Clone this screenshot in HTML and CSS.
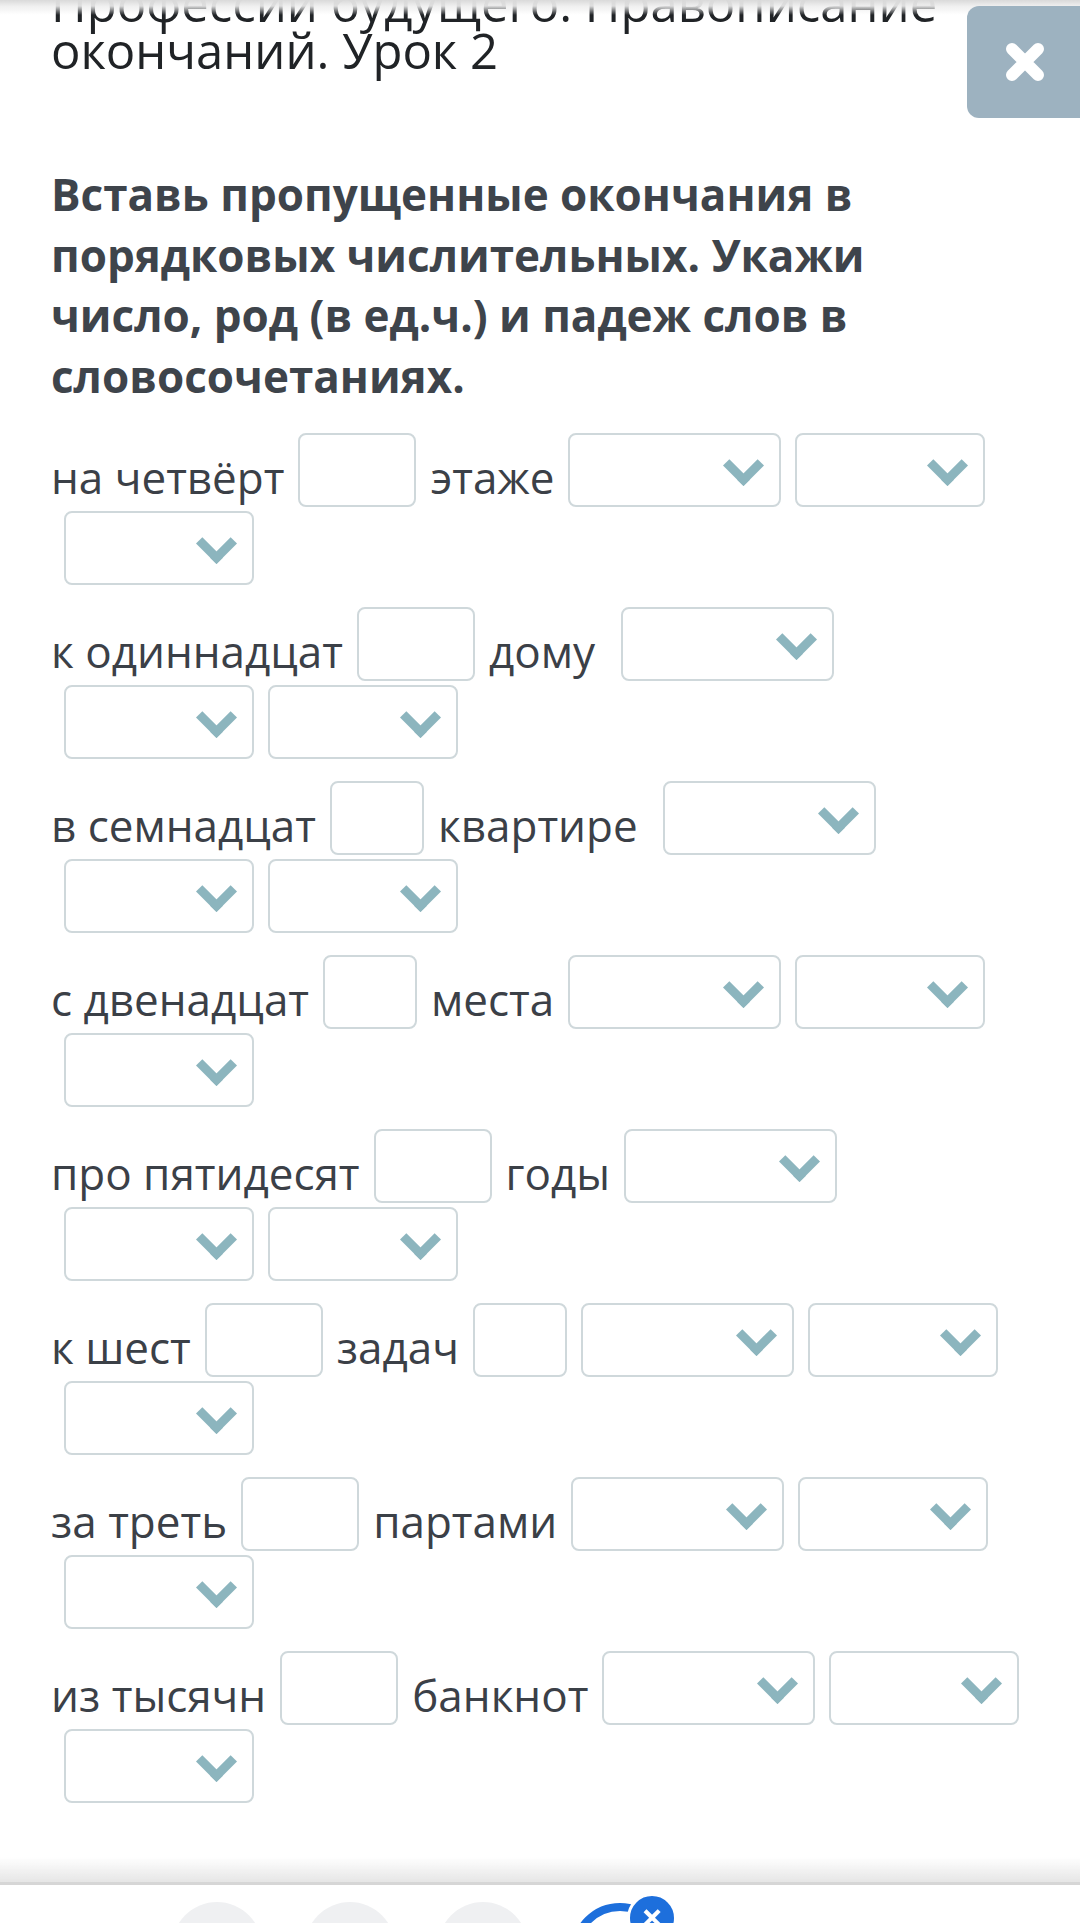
FILE: index.html
```html
<!DOCTYPE html>
<html lang="ru">
<head>
  <meta charset="UTF-8">
  <meta name="viewport" content="width=device-width, initial-scale=1.0">
  <title>Профессии будущего. Правописание окончаний. Урок 2</title>
  <link rel="stylesheet" href="styles.css">
</head>
<body>

  <div class="top-shade"></div>
  <button class="close-btn" type="button" aria-label="Закрыть">
    <svg width="44" height="42" viewBox="0 0 44 42"><path d="M9 8 L35 34 M35 8 L9 34" stroke="#fff" stroke-width="12" stroke-linecap="round"/></svg>
  </button>

  <main class="lesson">
    <h1 class="title">Профессии будущего. Правописание окончаний. Урок 2</h1>
    <p class="task">Вставь пропущенные окончания в порядковых числительных. Укажи число, род (в ед.ч.) и падеж слов в словосочетаниях.</p>

    <!-- 1 -->
    <div class="phrase">
      <div class="line">
        <span class="word">на четвёрт</span>
        <input class="gap" type="text">
        <span class="word">этаже</span>
        <span class="pick big"><select><option></option></select></span>
        <span class="pick"><select><option></option></select></span>
      </div>
      <div class="line">
        <span class="pick"><select><option></option></select></span>
      </div>
    </div>

    <!-- 2 -->
    <div class="phrase">
      <div class="line">
        <span class="word">к одиннадцат</span>
        <input class="gap" type="text">
        <span class="word">дому </span>
        <span class="pick big"><select><option></option></select></span>
      </div>
      <div class="line">
        <span class="pick"><select><option></option></select></span>
        <span class="pick"><select><option></option></select></span>
      </div>
    </div>

    <!-- 3 -->
    <div class="phrase">
      <div class="line">
        <span class="word">в семнадцат</span>
        <input class="gap short" type="text">
        <span class="word">квартире </span>
        <span class="pick big"><select><option></option></select></span>
      </div>
      <div class="line">
        <span class="pick"><select><option></option></select></span>
        <span class="pick"><select><option></option></select></span>
      </div>
    </div>

    <!-- 4 -->
    <div class="phrase">
      <div class="line">
        <span class="word">с двенадцат</span>
        <input class="gap short" type="text">
        <span class="word">места</span>
        <span class="pick big"><select><option></option></select></span>
        <span class="pick"><select><option></option></select></span>
      </div>
      <div class="line">
        <span class="pick"><select><option></option></select></span>
      </div>
    </div>

    <!-- 5 -->
    <div class="phrase">
      <div class="line">
        <span class="word">про пятидесят</span>
        <input class="gap" type="text">
        <span class="word">годы</span>
        <span class="pick big"><select><option></option></select></span>
      </div>
      <div class="line">
        <span class="pick"><select><option></option></select></span>
        <span class="pick"><select><option></option></select></span>
      </div>
    </div>

    <!-- 6 -->
    <div class="phrase">
      <div class="line">
        <span class="word">к шест</span>
        <input class="gap" type="text">
        <span class="word">задач</span>
        <input class="gap short" type="text">
        <span class="pick big"><select><option></option></select></span>
        <span class="pick"><select><option></option></select></span>
      </div>
      <div class="line">
        <span class="pick"><select><option></option></select></span>
      </div>
    </div>

    <!-- 7 -->
    <div class="phrase">
      <div class="line">
        <span class="word">за треть</span>
        <input class="gap" type="text">
        <span class="word">партами</span>
        <span class="pick big"><select><option></option></select></span>
        <span class="pick"><select><option></option></select></span>
      </div>
      <div class="line">
        <span class="pick"><select><option></option></select></span>
      </div>
    </div>

    <!-- 8 -->
    <div class="phrase">
      <div class="line">
        <span class="word">из тысячн</span>
        <input class="gap" type="text">
        <span class="word">банкнот</span>
        <span class="pick big"><select><option></option></select></span>
        <span class="pick"><select><option></option></select></span>
      </div>
      <div class="line">
        <span class="pick"><select><option></option></select></span>
      </div>
    </div>
  </main>

  <!-- нижняя панель -->
  <footer class="dock">
    <div class="dock-nav">
      <span class="dot"></span>
      <span class="dot"></span>
      <span class="dot"></span>
      <span class="dock-active">
        <span class="ring"></span>
        <span class="badge">×</span>
      </span>
    </div>
  </footer>

</body>
</html>
```

FILE: styles.css
```css
/* Общие стили */
body {
  margin: 0;
  background: #fff;
  font-family: "Open Sans", "Noto Sans", sans-serif;
  color: #3b4047;
  overflow: hidden;
}
.lesson {
  padding: 0 48px 0 51px;
}
.title {
  margin: -20px 0 0;
  font-size: 49px;
  font-weight: 400;
  line-height: 47px;
  color: #202326;
}
.task {
  margin: 90px 70px 27px 0;
  font-size: 44px;
  font-weight: 700;
  line-height: 60.5px;
  color: #3e444b;
}

/* Строки с пропусками */
.phrase {
  margin-bottom: 22px;
}
.line {
  display: flex;
  align-items: flex-end;
}
.line + .line {
  margin-top: 4px;
  padding-left: 13px;
}
.line > * + * {
  margin-left: 14px;
}
.word {
  font-size: 44px;
  line-height: 60px;
  white-space: pre;
}
.gap {
  box-sizing: border-box;
  width: 118px;
  height: 74px;
  padding: 0 10px;
  border: 2px solid #cfd8db;
  border-radius: 8px;
  background: #fff;
  font: inherit;
  font-size: 40px;
}
.gap.short {
  width: 94px;
}
.pick {
  position: relative;
  display: block;
  width: 190px;
  height: 74px;
}
.pick.big {
  width: 213px;
}
.pick select {
  box-sizing: border-box;
  width: 100%;
  height: 100%;
  border: 2px solid #cfd8db;
  border-radius: 8px;
  background: #fff;
  appearance: none;
  -webkit-appearance: none;
  font: inherit;
}
.pick::after {
  content: "";
  position: absolute;
  top: 18px;
  right: 23px;
  width: 20px;
  height: 20px;
  border-right: 9px solid #8cb5be;
  border-bottom: 9px solid #8cb5be;
  transform: rotate(45deg);
  pointer-events: none;
}

/* Верх */
.top-shade {
  position: fixed;
  top: 0;
  left: 0;
  right: 0;
  height: 15px;
  background: linear-gradient(#d9d9d9 0, rgba(238,238,238,0.92) 6px, rgba(255,255,255,0) 15px);
  z-index: 2;
}
.close-btn {
  position: fixed;
  top: 6px;
  left: 967px;
  width: 133px;
  height: 112px;
  border: none;
  border-radius: 12px;
  background: #9db2c0;
  display: flex;
  align-items: center;
  justify-content: flex-start;
  padding: 0 0 0 36px;
  z-index: 3;
  cursor: pointer;
}

/* Нижняя панель */
.dock {
  position: fixed;
  left: 0;
  right: 0;
  bottom: 0;
  height: 66px;
  overflow: hidden;
  background: linear-gradient(rgba(255,255,255,0) 0, #e6e6e6 25px, #d6d6d6 25px, #d6d6d6 28px, #fff 28px);
}
.dock-nav {
  display: flex;
  gap: 43px;
  padding: 45px 0 0 172px;
}
.dot {
  width: 90px;
  height: 90px;
  border-radius: 50%;
  background: #eff0f2;
}
.dock-active {
  position: relative;
  width: 100px;
  height: 100px;
}
.ring {
  display: block;
  box-sizing: border-box;
  width: 98px;
  height: 98px;
  margin-top: 1px;
  border: 8px solid #1d6fdc;
  border-radius: 50%;
}
.badge {
  position: absolute;
  left: 56px;
  top: -9px;
  width: 44px;
  height: 44px;
  border: 3px solid #fff;
  border-radius: 50%;
  background: #1d6fdc;
  color: #fff;
  font-size: 38px;
  font-weight: 700;
  line-height: 40px;
  text-align: center;
}
```
